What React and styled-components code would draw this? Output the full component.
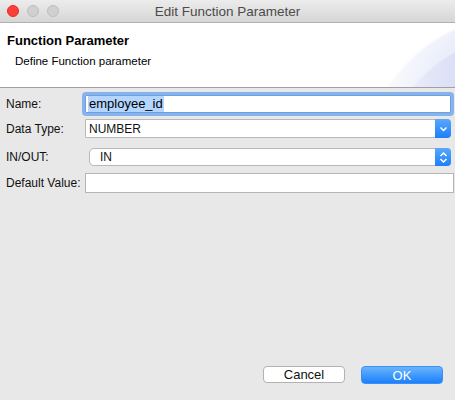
import React from "react";
import styled, { createGlobalStyle } from "styled-components";

const Global = createGlobalStyle`
  html, body { margin: 0; padding: 0; background: #e8e8e8; }
  body { font-family: "Liberation Sans", Arial, sans-serif; }
`;

const Window = styled.div`
  width: 455px;
  height: 400px;
  display: flex;
  flex-direction: column;
  background: #e8e8e8;
  overflow: hidden;
  font-family: "Liberation Sans", Arial, sans-serif;
`;

const TitleBar = styled.div`
  height: 22px;
  flex: none;
  display: flex;
  align-items: center;
  position: relative;
  background: linear-gradient(#ececec, #d6d6d6);
  border-bottom: 1px solid #b1b1b1;
`;

const Lights = styled.div`
  display: flex;
  gap: 8px;
  padding-left: 7px;
`;

const Light = styled.span`
  width: 12px;
  height: 12px;
  border-radius: 50%;
  box-sizing: border-box;
  background: ${(p) => (p.$red ? "#fc3d39" : "#d0d0d0")};
  border: 1px solid ${(p) => (p.$red ? "#e0302c" : "#bdbdbd")};
`;

const Title = styled.div`
  position: absolute;
  left: 0;
  right: 0;
  text-align: center;
  font-size: 13.5px;
  color: #4b4b4b;
`;

const Header = styled.div`
  height: 65px;
  flex: none;
  box-sizing: border-box;
  border-bottom: 1px solid #a0a0a0;
  padding: 10px 7px 0;
  background:
    linear-gradient(to right, #ffffff 0, rgba(255,255,255,0.85) 370px, rgba(255,255,255,0.2) 430px, rgba(255,255,255,0) 455px),
    radial-gradient(circle at 520px 150px, #d8def5 0, #dbe0f6 136px, #e9ecfa 138px, #eef0fb 156px, #ffffff 159px);
`;

const HeaderTitle = styled.div`
  font-weight: bold;
  font-size: 13px;
  color: #000;
  line-height: 16px;
`;

const HeaderSub = styled.div`
  font-size: 11.5px;
  color: #000;
  margin-top: 5px;
  padding-left: 8px;
  line-height: 14px;
`;

const Form = styled.div`
  display: flex;
  flex-direction: column;
  padding-top: 4px;
`;

const Row = styled.div`
  display: flex;
  align-items: center;
  height: ${(p) => p.$h}px;
  margin-top: ${(p) => p.$mt || 0}px;
`;

const Label = styled.div`
  width: 76px;
  padding-left: 6px;
  flex: none;
  font-size: 12px;
  color: #111;
`;

const FocusField = styled.div`
  width: 372px;
  height: 24px;
  box-sizing: border-box;
  border: 3px solid #86b3ec;
  border-radius: 4px;
  background: #fff;
  display: flex;
  align-items: center;
  padding-left: 3px;
  box-shadow: inset 0 0 0 1px #6f9fde;
`;

const Selected = styled.span`
  background: #b4d5fe;
  font-size: 13px;
  line-height: 16px;
  padding: 0 1px;
  color: #000;
`;

const Combo = styled.div`
  margin-left: ${(p) => p.$ml}px;
  width: ${(p) => p.$w}px;
  height: 100%;
  box-sizing: border-box;
  border: 1px solid #b8b8b8;
  border-radius: ${(p) => (p.$round ? "5px" : "1px")} 4px 4px ${(p) => (p.$round ? "5px" : "1px")};
  background: #fff;
  display: flex;
  align-items: center;
  font-size: 12px;
  color: #111;
`;

const ComboText = styled.span`
  flex: 1;
  padding-left: ${(p) => p.$pl}px;
`;

const ComboButton = styled.div`
  width: 16px;
  align-self: stretch;
  margin: -1px -1px -1px 0;
  border-radius: 0 4px 4px 0;
  background: linear-gradient(#5aa8fb, #1c7ffa);
  display: flex;
  align-items: center;
  justify-content: center;
`;

const TextBox = styled.div`
  margin-left: 3px;
  width: 369px;
  height: 100%;
  box-sizing: border-box;
  border: 1px solid #b5b5b5;
  background: #fff;
`;

const Spacer = styled.div`
  flex: 1;
`;

const Footer = styled.div`
  display: flex;
  justify-content: flex-end;
  gap: 16px;
  padding: 0 12px 16px 0;
`;

const Button = styled.button`
  width: 82px;
  height: ${(p) => (p.$primary ? 18 : 17)}px;
  box-sizing: border-box;
  border-radius: 4px;
  font-family: "Liberation Sans", Arial, sans-serif;
  font-size: 13px;
  padding: 0;
  line-height: 15px;
  border: 1px solid ${(p) => (p.$primary ? "#3c8ffb" : "#b2b2b2")};
  background: ${(p) => (p.$primary ? "linear-gradient(#6bb4fc, #1a80fb)" : "#fff")};
  color: ${(p) => (p.$primary ? "#fff" : "#111")};
`;

const ChevronDown = () => (
  <svg width="9" height="6" viewBox="0 0 9 6">
    <path d="M1.5 1.5 L4.5 4.5 L7.5 1.5" fill="none" stroke="#fff" strokeWidth="1.5" />
  </svg>
);

const ChevronUpDown = () => (
  <svg width="9" height="13" viewBox="0 0 9 13">
    <path d="M1.5 5 L4.5 2 L7.5 5" fill="none" stroke="#fff" strokeWidth="1.5" />
    <path d="M1.5 8 L4.5 11 L7.5 8" fill="none" stroke="#fff" strokeWidth="1.5" />
  </svg>
);

export default function App() {
  return (
    <Window>
      <Global />
      <TitleBar>
        <Lights>
          <Light $red />
          <Light />
          <Light />
        </Lights>
        <Title>Edit Function Parameter</Title>
      </TitleBar>
      <Header>
        <HeaderTitle>Function Parameter</HeaderTitle>
        <HeaderSub>Define Function parameter</HeaderSub>
      </Header>
      <Form>
        <Row $h={24}>
          <Label>Name:</Label>
          <FocusField>
            <Selected>employee_id</Selected>
          </FocusField>
        </Row>
        <Row $h={19} $mt={3}>
          <Label>Data Type:</Label>
          <Combo $ml={3} $w={366}>
            <ComboText $pl={3}>NUMBER</ComboText>
            <ComboButton>
              <ChevronDown />
            </ComboButton>
          </Combo>
        </Row>
        <Row $h={18} $mt={10}>
          <Label>IN/OUT:</Label>
          <Combo $ml={7} $w={362} $round>
            <ComboText $pl={10}>IN</ComboText>
            <ComboButton>
              <ChevronUpDown />
            </ComboButton>
          </Combo>
        </Row>
        <Row $h={20} $mt={7}>
          <Label>Default Value:</Label>
          <TextBox />
        </Row>
      </Form>
      <Spacer />
      <Footer>
        <Button>Cancel</Button>
        <Button $primary>OK</Button>
      </Footer>
    </Window>
  );
}
